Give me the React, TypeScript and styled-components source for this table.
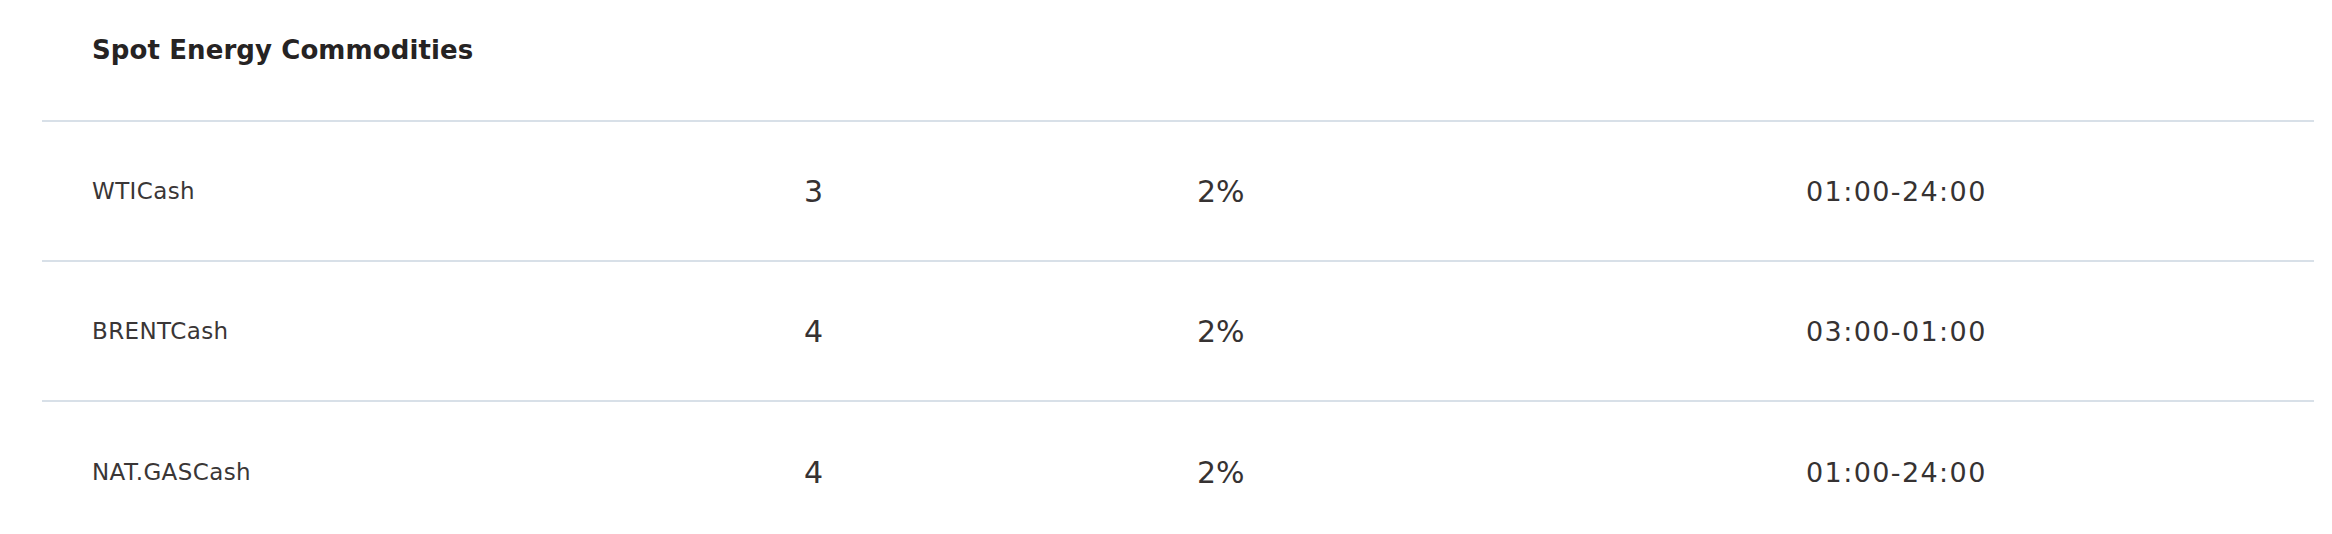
import styled, { createGlobalStyle } from 'styled-components'

type Commodity = {
  symbol: string
  leverage: string
  margin: string
  hours: string
}

const commodities: Commodity[] = [
  { symbol: 'WTICash', leverage: '3', margin: '2%', hours: '01:00-24:00' },
  { symbol: 'BRENTCash', leverage: '4', margin: '2%', hours: '03:00-01:00' },
  { symbol: 'NAT.GASCash', leverage: '4', margin: '2%', hours: '01:00-24:00' },
]

const GlobalStyle = createGlobalStyle`
  html, body {
    margin: 0;
    padding: 0;
    background: #ffffff;
  }

  body {
    font-family: "DejaVu Sans", "Noto Sans", sans-serif;
    color: #2b2b2b;
  }
`

function App() {
  return (
    <>
      <GlobalStyle />
      <Section>
        <Header>
          <Title>Spot Energy Commodities</Title>
        </Header>
        {commodities.map((item) => (
          <Row key={item.symbol}>
            <Symbol>{item.symbol}</Symbol>
            <Value>{item.leverage}</Value>
            <Value>{item.margin}</Value>
            <Value $small>{item.hours}</Value>
          </Row>
        ))}
      </Section>
    </>
  )
}

const Section = styled.section`
  margin: 0 18px 0 42px;
`

const Header = styled.header`
  height: 122px;
  box-sizing: border-box;
  padding: 33px 50px 0;
  border-bottom: 2px solid #d8e0e8;
`

const Title = styled.h2`
  margin: 0;
  font-size: 26px;
  line-height: 34px;
  font-weight: 700;
  letter-spacing: 0.1px;
  color: #262323;
`

const Row = styled.div`
  display: grid;
  grid-template-columns: 712px 393px 609px 1fr;
  align-items: center;
  height: 140px;
  box-sizing: border-box;
  padding: 0 50px;
  border-bottom: 2px solid #d8e0e8;

  &:last-child {
    border-bottom: none;
  }
`

const Symbol = styled.div`
  font-size: 23px;
  letter-spacing: 0.4px;
  color: #3a3636;
`

const Value = styled.div<{ $small?: boolean }>`
  font-size: ${(p) => (p.$small ? '27px' : '30px')};
  letter-spacing: ${(p) => (p.$small ? '1.4px' : '0')};
  color: #363232;
`

export default App
